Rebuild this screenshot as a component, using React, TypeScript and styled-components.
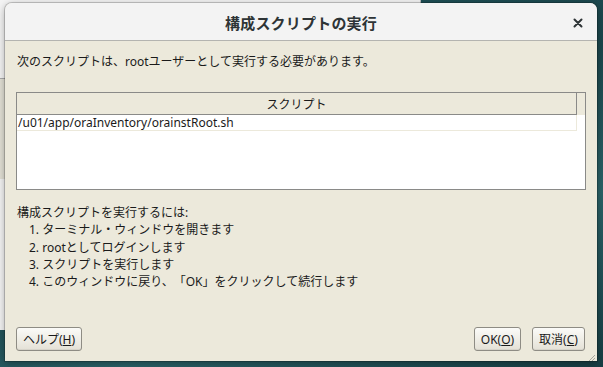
import React from "react";
import styled, { createGlobalStyle } from "styled-components";

const Global = createGlobalStyle`
  html, body { margin: 0; padding: 0; }
  body {
    width: 603px; height: 367px; overflow: hidden;
    background: linear-gradient(160deg, #235a60 0%, #1b464c 45%, #2a6268 70%, #173e44 100%);
    font-family: "Noto Sans", "Noto Sans CJK JP", sans-serif;
    text-spacing-trim: space-all;
  }
`;

const Desktop = styled.div`
  position: relative;
  width: 603px;
  height: 367px;
  overflow: hidden;
`;

const BehindWindow = styled.div`
  position: absolute;
  left: 0;
  top: 0;
  width: 420px;
  height: 330px;
  background: #f4f4f4;
  border-right: 1px solid #bbb;
  &::after {
    content: "";
    position: absolute;
    left: 0; top: 78px; width: 100%; height: 100px;
    background: #e3e1d6;
    border-top: 1px solid #aaa;
  }
`;

const Dialog = styled.div`
  position: absolute;
  left: 5px;
  top: 3px;
  width: 592px;
  height: 358px;
  display: flex;
  flex-direction: column;
  border-radius: 7px 7px 0 0;
  overflow: hidden;
  background: #ece9db;
  box-shadow: 0 0 0 1px rgba(0,0,0,0.18), 0 2px 8px rgba(0,0,0,0.35);
`;

const TitleBar = styled.div`
  height: 37px;
  flex: none;
  display: flex;
  align-items: center;
  justify-content: center;
  position: relative;
  background: #f3f3f3;
  border-bottom: 1px solid #b4b4b0;
`;

const Title = styled.div`
  font-family: "Noto Sans CJK JP", sans-serif;
  font-weight: bold;
  font-size: 15px;
  color: #2e3436;
  letter-spacing: 0.2px;
  margin-top: 1px;
`;

const Close = styled.div`
  position: absolute;
  right: 13px;
  top: 14px;
  width: 12px;
  height: 12px;
  display: flex;
  align-items: center;
  justify-content: center;
`;

const Body = styled.div`
  flex: 1;
  display: flex;
  flex-direction: column;
  padding: 12px 11px 10px 11px;
  color: #1a1a1a;
  font-size: 12px;
  position: relative;
`;

const Lead = styled.div`
  line-height: 17px;
  margin-left: 1px;
`;

const Table = styled.div`
  margin-top: 22px;
  height: 98px;
  border: 1px solid #8a8a88;
  background: #fff;
  box-sizing: border-box;
  display: flex;
  flex-direction: column;
`;

const HeaderRow = styled.div`
  display: flex;
  background: #ece9db;
`;

const HeaderCell = styled.div`
  flex: none;
  width: 560px;
  height: 22px;
  box-sizing: border-box;
  border-right: 1px solid #8a8a88;
  border-bottom: 1px solid #8a8a88;
  display: flex;
  align-items: center;
  justify-content: center;
  font-size: 12px;
`;

const DataRow = styled.div`
  width: 560px;
  height: 16px;
  box-sizing: border-box;
  border-right: 1px solid #ece9db;
  border-bottom: 1px solid #ece9db;
  padding-left: 1px;
  line-height: 15px;
  font-size: 12px;
`;

const Instructions = styled.div`
  margin-top: 14px;
  line-height: 17.25px;
  margin-left: 1px;
`;

const Step = styled.div`
  padding-left: 12px;
`;

const Footer = styled.div`
  margin-top: auto;
  display: flex;
  align-items: center;
  gap: 11px;
  margin-right: 1px;
`;

const Spacer = styled.div`
  flex: 1;
`;

const Button = styled.button<{ $w: number }>`
  width: ${(p) => p.$w}px;
  height: 24px;
  box-sizing: border-box;
  border: 1px solid #8e8c84;
  border-radius: 3px;
  background: linear-gradient(#fbfbf8, #e4e1d6);
  box-shadow: inset 0 -1px 0 rgba(0,0,0,0.06);
  font-family: "Noto Sans", "Noto Sans CJK JP", sans-serif;
  font-size: 12px;
  color: #1a1a1a;
  padding: 0;
  display: flex;
  align-items: center;
  justify-content: center;
`;

const U = styled.span`
  text-decoration: underline;
`;

const Grip = styled.div`
  position: absolute;
  right: 1px;
  bottom: 1px;
  width: 10px;
  height: 10px;
`;

export default function App() {
  return (
    <>
      <Global />
      <Desktop>
        <BehindWindow />
        <Dialog>
          <TitleBar>
            <Title>構成スクリプトの実行</Title>
            <Close>
              <svg width="10" height="10" viewBox="0 0 10 10">
                <path d="M1.5 1.5 L8.5 8.5 M8.5 1.5 L1.5 8.5" stroke="#2e3436" strokeWidth="2" strokeLinecap="round" />
              </svg>
            </Close>
          </TitleBar>
          <Body>
            <Lead>次のスクリプトは、rootユーザーとして実行する必要があります。</Lead>
            <Table>
              <HeaderRow>
                <HeaderCell>スクリプト</HeaderCell>
              </HeaderRow>
              <DataRow>/u01/app/oraInventory/orainstRoot.sh</DataRow>
            </Table>
            <Instructions>
              <div>構成スクリプトを実行するには:</div>
              <Step>1. ターミナル・ウィンドウを開きます</Step>
              <Step>2. rootとしてログインします</Step>
              <Step>3. スクリプトを実行します</Step>
              <Step>4. このウィンドウに戻り、「OK」をクリックして続行します</Step>
            </Instructions>
            <Footer>
              <Button $w={66}>ヘルプ(<U>H</U>)</Button>
              <Spacer />
              <Button $w={47}>OK(<U>O</U>)</Button>
              <Button $w={53}>取消(<U>C</U>)</Button>
            </Footer>
            <Grip>
              <svg width="10" height="10" viewBox="0 0 10 10">
                <path d="M9 2 L2 9 M9 5 L5 9 M9 8 L8 9" stroke="#a8a69c" strokeWidth="1" />
              </svg>
            </Grip>
          </Body>
        </Dialog>
      </Desktop>
    </>
  );
}
